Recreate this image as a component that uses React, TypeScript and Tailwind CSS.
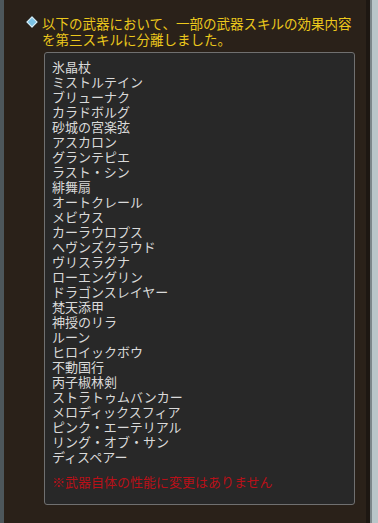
const weapons = [
  '氷晶杖',
  'ミストルテイン',
  'ブリューナク',
  'カラドボルグ',
  '砂城の宮楽弦',
  'アスカロン',
  'グランテピエ',
  'ラスト・シン',
  '緋舞扇',
  'オートクレール',
  'メビウス',
  'カーラウロプス',
  'ヘヴンズクラウド',
  'ヴリスラグナ',
  'ローエングリン',
  'ドラゴンスレイヤー',
  '梵天添甲',
  '神授のリラ',
  'ルーン',
  'ヒロイックボウ',
  '不動国行',
  '丙子椒林剣',
  'ストラトゥムバンカー',
  'メロディックスフィア',
  'ピンク・エーテリアル',
  'リング・オブ・サン',
  'ディスペアー',
]

export default function App() {
  return (
    <div
      className="flex h-[523px] w-[378px] overflow-hidden bg-[#2b221b]"
      style={{ fontFamily: '"Noto Sans CJK JP", "Noto Sans", sans-serif' }}
    >
      <div className="w-[4px] bg-[#4d575b]" />
      <div className="flex flex-1 flex-col bg-[#2a2119] pl-[22px] pt-[15px]">
        <div className="flex gap-[4px]">
          <div className="mt-[1px] flex h-[12px] w-[12px] shrink-0 items-center justify-center">
            <div className="h-[8px] w-[8px] rotate-45 border border-[#dfeef5] bg-[#7cc4e6]" />
          </div>
          <p className="text-[13.5px] leading-[16px] text-[#ecc81c]">
            以下の武器において、一部の武器スキルの効果内容
            <br />
            を第三スキルに分離しました。
          </p>
        </div>
        <div className="ml-[18px] mt-[5px] h-[453px] w-[311px] rounded-[3px] border border-[#707070] bg-[#282828] pl-[7px] pt-[6px]">
          <ul className="text-[13px] leading-[15px] text-[#dadada]">
            {weapons.map((w) => (
              <li key={w}>{w}</li>
            ))}
          </ul>
          <p className="mt-[10px] text-[13px] leading-[16px] text-[#b81018]">
            ※武器自体の性能に変更はありません
          </p>
        </div>
      </div>
      <div className="w-[4px] bg-[#1d1712]" />
      <div className="w-[2px] bg-[#7d878a]" />
      <div className="w-[6px] bg-[#b9c5c8]" />
    </div>
  )
}
